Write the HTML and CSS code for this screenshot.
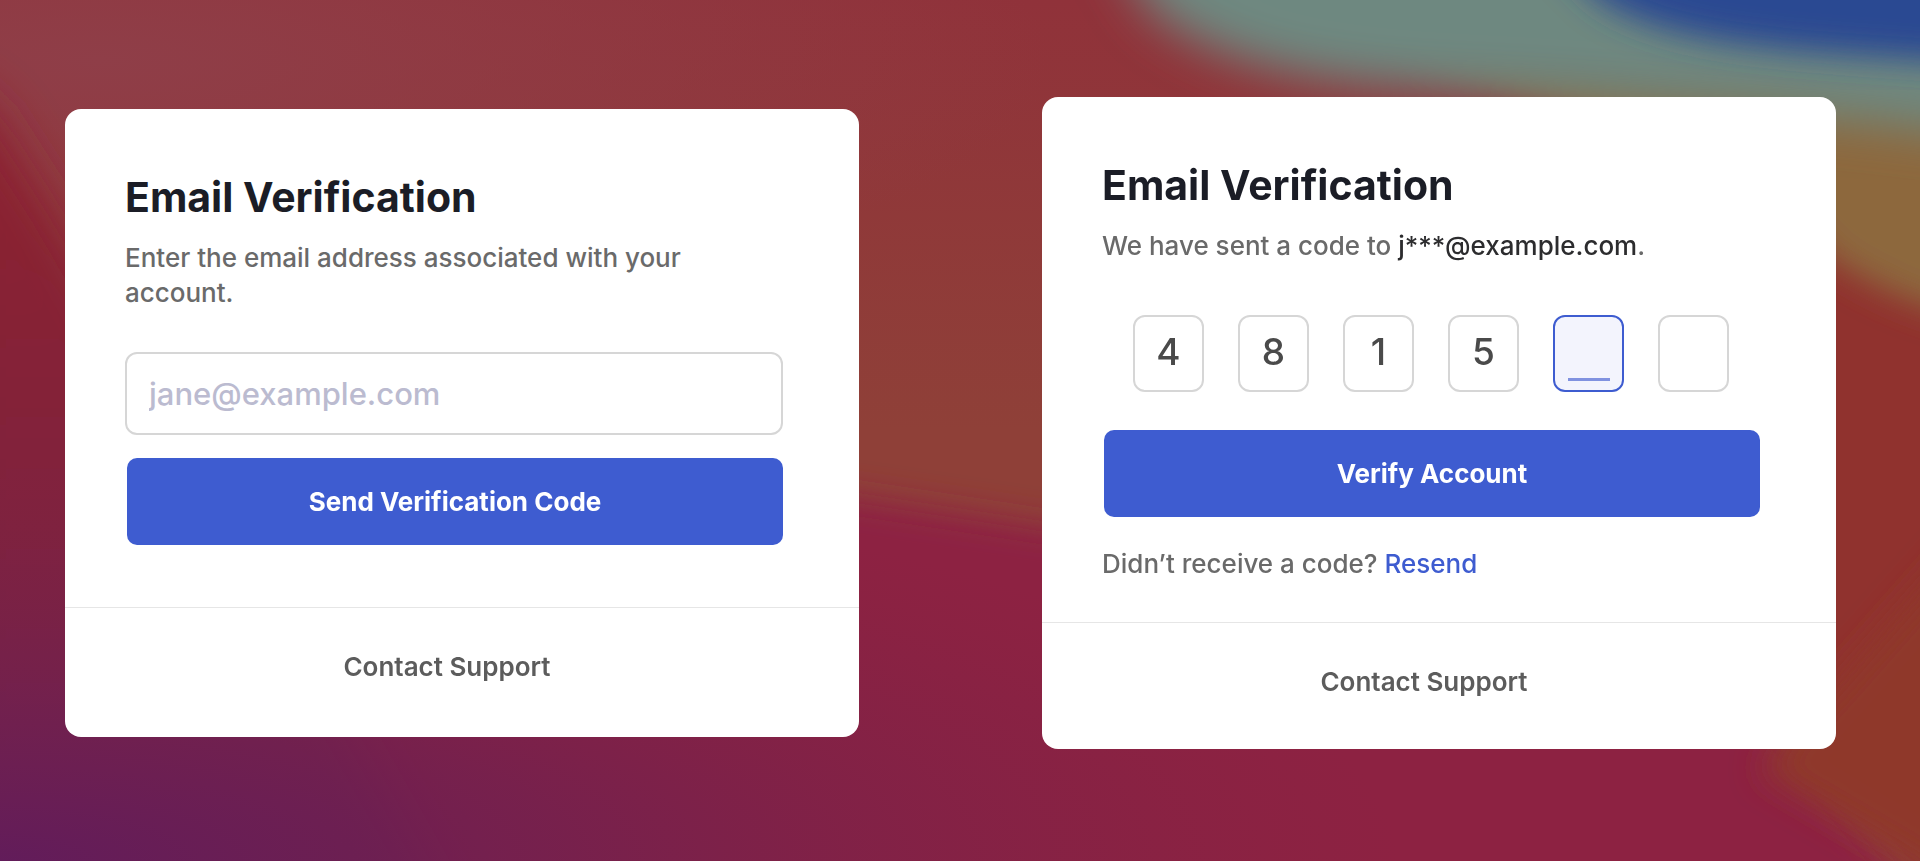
FILE: index.html
```html
<!DOCTYPE html>
<html lang="en">
<head>
<meta charset="utf-8">
<meta name="viewport" content="width=device-width, initial-scale=1">
<title>Email Verification</title>
<link rel="stylesheet" href="styles.css">
</head>
<body>
<svg class="backdrop" viewBox="0 0 1920 861" preserveAspectRatio="none" aria-hidden="true">
  <defs>
    <linearGradient id="base" x1="0" y1="0" x2="0" y2="1">
      <stop offset="0" stop-color="#90323a"/>
      <stop offset="0.5" stop-color="#8f4038"/>
      <stop offset="1" stop-color="#8f4038"/>
    </linearGradient>
    <linearGradient id="left" x1="0" y1="0" x2="0" y2="1">
      <stop offset="0.1" stop-color="#8b2430"/>
      <stop offset="0.5" stop-color="#7f233e"/>
      <stop offset="0.85" stop-color="#76204a"/>
    </linearGradient>
    <radialGradient id="rose">
      <stop offset="0" stop-color="#8f3e48"/>
      <stop offset="1" stop-color="#8f3e48" stop-opacity="0"/>
    </radialGradient>
    <radialGradient id="plum">
      <stop offset="0" stop-color="#621c5a"/>
      <stop offset="0.4" stop-color="#6f2050" stop-opacity="0.75"/>
      <stop offset="1" stop-color="#7f2243" stop-opacity="0"/>
    </radialGradient>
    <filter id="soft" x="-20%" y="-20%" width="140%" height="140%"><feGaussianBlur stdDeviation="16"/></filter>
    <filter id="wide" x="-20%" y="-20%" width="140%" height="140%"><feGaussianBlur stdDeviation="24"/></filter>
  </defs>
  <rect width="1920" height="861" fill="url(#base)"/>
  <ellipse cx="100" cy="60" rx="950" ry="260" fill="url(#rose)"/>
  <path d="M-90 620 C200 660 500 440 870 500 L1100 535 L1700 640 L2050 1050 L-90 1050Z" fill="#8d2443" filter="url(#soft)"/>
  <path d="M-60 80 L-10 110 L60 220 L500 1000 L-60 1000Z" fill="url(#left)" filter="url(#wide)"/>
  <ellipse cx="0" cy="861" rx="1400" ry="400" fill="url(#plum)"/>
  <path d="M1500 90 L2000 290 L2000 900 L1780 700Z" fill="#90302f" filter="url(#soft)"/>
  <path d="M1400 50 C1600 120 1780 190 1830 258 C1900 305 1960 318 2000 325 L2000 80Z" fill="#8d683e" filter="url(#soft)"/>
  <path d="M1110 -60 L1150 10 C1260 100 1440 85 1600 100 C1720 110 1850 115 2000 140 L2000 -60Z" fill="#6e8880" filter="url(#wide)"/>
  <path d="M1540 -60 L1600 0 C1680 50 1800 50 2000 65 L2000 -60Z" fill="#2a4892" filter="url(#soft)"/>
  <path d="M1760 770 L1850 670 L2000 500 L2000 1000 L1930 870Z" fill="#8f382b" filter="url(#soft)"/>
</svg>
<main class="stage">
  <section class="card">
    <form class="card-body">
      <h1 class="title">Email Verification</h1>
      <p class="lead">Enter the email address associated with your account.</p>
      <input class="email" type="email" placeholder="jane@example.com" aria-label="Email address">
      <button class="primary" type="button">Send Verification Code</button>
    </form>
    <footer class="card-footer"><a class="support" href="#">Contact Support</a></footer>
  </section>
  <section class="card">
    <form class="card-body card-body-code">
      <h1 class="title">Email Verification</h1>
      <p class="lead">We have sent a code to <span class="address">j***@example.com</span>.</p>
      <div class="code">
        <input class="digit" type="text" maxlength="1" value="4" aria-label="Digit 1">
        <input class="digit" type="text" maxlength="1" value="8" aria-label="Digit 2">
        <input class="digit" type="text" maxlength="1" value="1" aria-label="Digit 3">
        <input class="digit" type="text" maxlength="1" value="5" aria-label="Digit 4">
        <input class="digit digit-active" type="text" maxlength="1" aria-label="Digit 5">
        <input class="digit" type="text" maxlength="1" aria-label="Digit 6">
      </div>
      <button class="primary" type="button">Verify Account</button>
      <p class="resend">Didn’t receive a code? <a class="resend-link" href="#">Resend</a></p>
    </form>
    <footer class="card-footer card-footer-code"><a class="support" href="#">Contact Support</a></footer>
  </section>
</main>
</body>
</html>
```
FILE: styles.css
```css
* { box-sizing: border-box; }

body {
  margin: 0;
  background: #8f4038;
  color: #6a6a6a;
  font-family: Inter, "Liberation Sans", sans-serif;
  font-size: 26px;
  font-weight: 500;
  line-height: 35px;
}

.backdrop {
  position: fixed;
  inset: 0;
  width: 100%;
  height: 100%;
  z-index: -1;
}

.stage {
  min-height: 100vh;
  display: flex;
  align-items: center;
  gap: 183px;
  padding: 0 84px 16px 65px;
}

.card {
  flex: 1;
  min-width: 0;
  background: #fff;
  border-radius: 16px;
}

.card-body {
  display: flex;
  flex-direction: column;
  padding: 63px 76px 62px 60px;
}

.card-body-code { padding-bottom: 41px; }

.title {
  margin: 0 0 18px;
  color: #1b1d26;
  font-size: 41px;
  font-weight: 700;
  line-height: 50px;
}

.lead { margin: 0; }

.address { color: #2c2c2e; }

.email {
  width: 100%;
  height: 83px;
  margin: 42px 0 23px;
  padding: 0 22px;
  border: 2px solid #d6d6d6;
  border-radius: 12px;
  background: #fff;
  color: #444;
  font: inherit;
  font-size: 31px;
}

.email::placeholder { color: #bbbbd0; opacity: 1; }

.primary {
  height: 87px;
  margin-left: 2px;
  border: 0;
  border-radius: 10px;
  background: #3e5cd0;
  color: #fff;
  font: inherit;
  font-weight: 700;
}

.code {
  display: flex;
  justify-content: center;
  gap: 34px;
  margin: 52px 0 38px;
}

.digit {
  width: 71px;
  height: 77px;
  padding: 0 0 4px;
  border: 2px solid #d6d6d6;
  border-radius: 12px;
  background: #fff;
  color: #4a4a4a;
  font: inherit;
  font-size: 37px;
  text-align: center;
}

.digit-active {
  border-color: #3e5cd0;
  background: #f3f4fd linear-gradient(#8092e0, #8092e0) center bottom 9px / 42px 3px no-repeat;
}

.resend { margin: 29px 0 0; }

.resend-link { color: #3e5cd0; text-decoration: none; }

.card-footer {
  padding: 41px 90px 53px 60px;
  border-top: 1px solid #e6e6e6;
  text-align: center;
}

.card-footer-code { padding-bottom: 50px; }

.support {
  color: #5c5c5c;
  font-weight: 600;
  text-decoration: none;
}
```
